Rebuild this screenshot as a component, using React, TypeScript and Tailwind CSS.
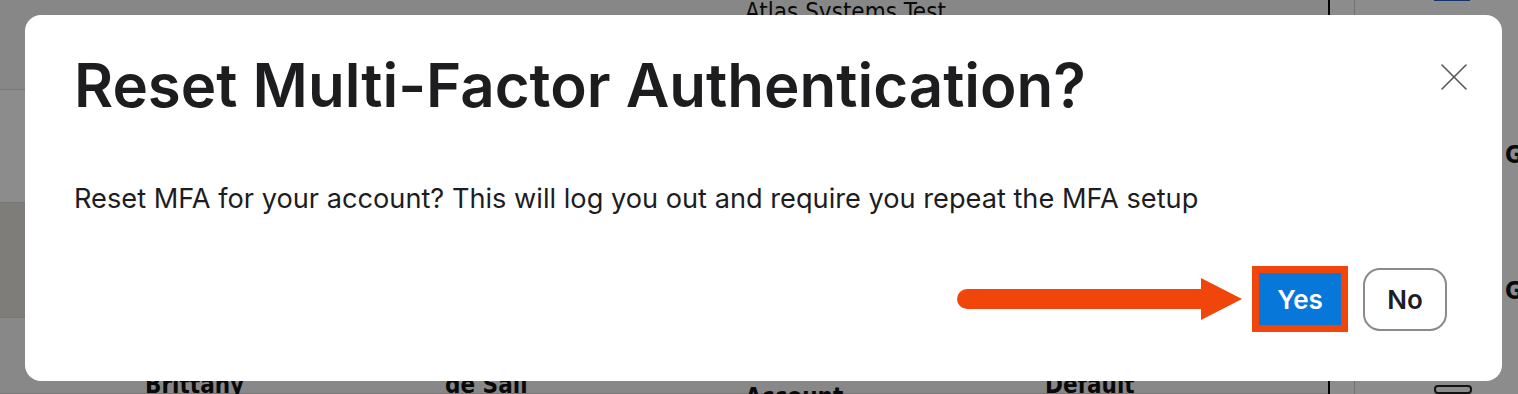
import { X } from 'lucide-react'

const rows = [
  { h: 'h-[90px]', cells: ['', '', 'Atlas Systems Test', ''], bg: 'bg-[#f6f6f6]', align: 'items-start -mt-[6px]' },
  { h: 'h-[113px]', cells: ['', '', '', ''], bg: 'bg-white', align: 'items-center' },
  { h: 'h-[115px]', cells: ['', '', '', ''], bg: 'bg-[#e6e3df]', align: 'items-center' },
  { h: 'h-[76px]', cells: ['Brittany', 'de Sail', 'Account', 'Default'], bg: 'bg-[#f7f7f7]', align: 'items-end pb-0' },
]

function BackgroundPage() {
  return (
    <div className="flex h-full w-full bg-white font-['DejaVu_Sans_Condensed','Liberation_Sans',sans-serif]">
      <div className="flex w-[1328px] shrink-0 flex-col overflow-hidden">
        {rows.map((row, i) => (
          <div key={i} className={`flex shrink-0 ${row.h} ${row.bg} border-b border-[#d9d9d9]`}>
            {row.cells.map((c, j) => (
              <div key={j} className={`flex w-[300px] shrink-0 ${j === 0 ? 'ml-[145px]' : ''} ${row.align}`}>
                <span
                  className={`whitespace-nowrap text-[24px] text-[#111] ${i === 3 ? 'font-bold' : ''} ${
                    j === 2 && i === 3 ? 'mb-[-22px]' : 'mb-[-10px]'
                  }`}
                >
                  {c}
                </span>
              </div>
            ))}
          </div>
        ))}
      </div>
      <div className="h-full w-[2px] shrink-0 bg-black" />
      <div className="h-full w-[25px] shrink-0 border-r border-[#cfcfcf]" />
      <div className="flex w-[163px] shrink-0 flex-col pl-[79px]">
        <div className="h-[4px] w-[36px] bg-[#1f5fbf]" />
        <div className="mt-[136px] whitespace-nowrap pl-[71px] text-[24px] font-bold text-[#111]">Group</div>
        <div className="mt-[100px] whitespace-nowrap pl-[71px] text-[24px] font-bold text-[#111]">Group</div>
        <div className="mt-[76px] h-[40px] w-[38px] rounded-[4px] border-2 border-[#222]" />
      </div>
    </div>
  )
}

function ResetMfaModal() {
  return (
    <div className="flex h-[366px] w-[1477px] flex-col rounded-[16px] bg-white pl-[49px] pr-[24px] font-['Inter','Liberation_Sans',sans-serif]">
      <div className="flex items-start justify-between pt-[34px]">
        <h1 className="text-[60px] font-semibold leading-[72px] text-[#1d1d1f]">
          Reset Multi-Factor Authentication?
        </h1>
        <button className="mt-[4px] text-[#555]">
          <X size={48} strokeWidth={0.8} />
        </button>
      </div>
      <p className="mt-[62px] whitespace-nowrap text-[27.2px] leading-[32px] text-[#1d1d1f]">
        Reset MFA for your account? This will log you out and require you repeat the MFA setup
      </p>
      <div className="mt-[51px] flex items-center justify-end pr-[31px]">
        <div className="mr-[10px] flex items-center">
          <div className="h-[20px] w-[245px] rounded-l-full bg-[#f0460c]" />
          <svg width="41" height="42" viewBox="0 0 41 42" className="-ml-[1px]">
            <polygon points="0,0 41,21 0,42" fill="#f0460c" />
          </svg>
        </div>
        <div className="border-[7px] border-[#f0460c]">
          <button className="flex h-[52px] w-[82px] items-center justify-center bg-[#0777d9] text-[26px] font-semibold text-white">
            Yes
          </button>
        </div>
        <button className="ml-[15px] flex h-[63px] w-[84px] items-center justify-center rounded-[17px] border-2 border-[#8a8a8a] text-[26px] font-semibold text-[#1d1d1f]">
          No
        </button>
      </div>
    </div>
  )
}

export default function App() {
  return (
    <div className="relative h-[394px] w-[1518px] overflow-hidden">
      <BackgroundPage />
      <div className="absolute inset-0 bg-black/[0.45] pl-[25px] pt-[15px]">
        <ResetMfaModal />
      </div>
    </div>
  )
}
